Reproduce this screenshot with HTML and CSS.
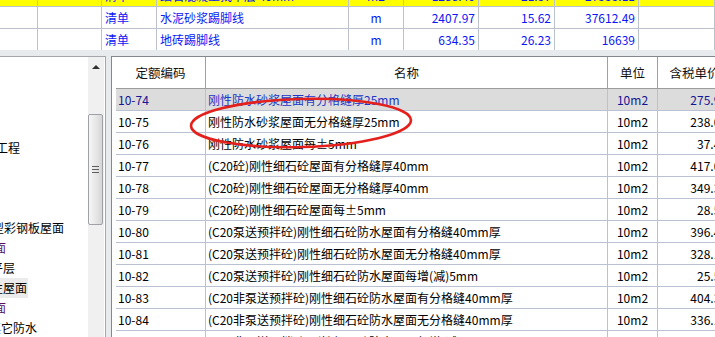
FILE: index.html
```html
<!DOCTYPE html>
<html lang="zh-CN">
<head>
  <meta charset="UTF-8" />
  <title>定额查询</title>
  <link rel="stylesheet" href="styles.css">
</head>
<body>

  <div class="bill-grid">
    <div class="bill-rows">
      <div class="bill-row current">
        <div></div><div></div><div>清单</div><div>细石混凝土找平层 40mm</div>
        <div class="ctr">m2</div><div class="num">1288.40</div><div class="num">21.37</div><div class="num">27533.11</div><div></div>
      </div>
      <div class="bill-row">
        <div></div><div></div><div>清单</div><div>水泥砂浆踢脚线</div>
        <div class="ctr">m</div><div class="num">2407.97</div><div class="num">15.62</div><div class="num">37612.49</div><div></div>
      </div>
      <div class="bill-row">
        <div></div><div></div><div>清单</div><div>地砖踢脚线</div>
        <div class="ctr">m</div><div class="num">634.35</div><div class="num">26.23</div><div class="num">16639</div><div></div>
      </div>
    </div>
  </div>

  <div class="work">
    <div class="tree-panel">
      <div class="tree">
        <div class="node"></div>
        <div class="node"></div>
        <div class="node"></div>
        <div class="node"></div>
        <div class="node"><span class="shift-28">屋面工程</span></div>
        <div class="node"></div>
        <div class="node"></div>
        <div class="node"></div>
        <div class="node"><span class="shift-20">压型彩钢板屋面</span></div>
        <div class="node group"><span class="shift-30">瓦屋面</span></div>
        <div class="node"><span class="shift-21">找平层</span></div>
        <div class="node"><span class="shift-21 selected">刚性屋面</span></div>
        <div class="node group"><span class="shift-30">平屋面</span></div>
        <div class="node"><span class="shift-11">其它防水</span></div>
      </div>
      <div class="vscroll">
        <div class="up"><span class="arrow"></span></div>
        <div class="thumb"><span class="grip"></span></div>
      </div>
    </div>

    <div class="quota-panel">
      <div class="quota-table">
        <div class="q-head">
          <div>定额编码</div><div>名称</div><div>单位</div><div>含税单价</div>
        </div>
        <div class="q-row active">
          <div>10-74</div><div class="name">刚性防水砂浆屋面有分格缝厚25mm</div><div class="ctr">10m2</div><div class="num">275.93</div>
        </div>
        <div class="q-row">
          <div>10-75</div><div class="name">刚性防水砂浆屋面无分格缝厚25mm</div><div class="ctr">10m2</div><div class="num">238.05</div>
        </div>
        <div class="q-row">
          <div>10-76</div><div class="name">刚性防水砂浆屋面每±5mm</div><div class="ctr">10m2</div><div class="num">37.44</div>
        </div>
        <div class="q-row">
          <div>10-77</div><div class="name">(C20砼)刚性细石砼屋面有分格缝厚40mm</div><div class="ctr">10m2</div><div class="num">417.06</div>
        </div>
        <div class="q-row">
          <div>10-78</div><div class="name">(C20砼)刚性细石砼屋面无分格缝厚40mm</div><div class="ctr">10m2</div><div class="num">349.33</div>
        </div>
        <div class="q-row">
          <div>10-79</div><div class="name">(C20砼)刚性细石砼屋面每±5mm</div><div class="ctr">10m2</div><div class="num">28.54</div>
        </div>
        <div class="q-row">
          <div>10-80</div><div class="name">(C20泵送预拌砼)刚性细石砼防水屋面有分格缝40mm厚</div><div class="ctr">10m2</div><div class="num">396.41</div>
        </div>
        <div class="q-row">
          <div>10-81</div><div class="name">(C20泵送预拌砼)刚性细石砼防水屋面无分格缝40mm厚</div><div class="ctr">10m2</div><div class="num">328.17</div>
        </div>
        <div class="q-row">
          <div>10-82</div><div class="name">(C20泵送预拌砼)刚性细石砼防水屋面每增(减)5mm</div><div class="ctr">10m2</div><div class="num">25.55</div>
        </div>
        <div class="q-row">
          <div>10-83</div><div class="name">(C20非泵送预拌砼)刚性细石砼防水屋面有分格缝40mm厚</div><div class="ctr">10m2</div><div class="num">404.33</div>
        </div>
        <div class="q-row">
          <div>10-84</div><div class="name">(C20非泵送预拌砼)刚性细石砼防水屋面无分格缝40mm厚</div><div class="ctr">10m2</div><div class="num">336.11</div>
        </div>
        <div class="q-row">
          <div>10-85</div><div class="name">(C20非泵送预拌砼)刚性细石砼防水屋面每增(减)5mm</div><div class="ctr">10m2</div><div class="num">26.02</div>
        </div>
      </div>
    </div>
  </div>

  <!-- red hand-drawn mark over row 10-75 -->
  <svg class="mark" width="715" height="337" viewBox="0 0 715 337">
    <ellipse cx="301" cy="123" rx="110" ry="24" transform="rotate(-1.5 301 123)" fill="none" stroke="#e3201b" stroke-width="2.6"/>
  </svg>

</body>
</html>
```

FILE: styles.css
```css
* {
  box-sizing: border-box;
}

body {
  margin: 0;
  width: 715px;
  height: 337px;
  overflow: hidden;
  position: relative;
  background: #e8ebed;
  font-family: "Noto Sans CJK SC", "DejaVu Sans", sans-serif;
  font-size: 12px;
  color: #000;
}

/* bill list on top */
.bill-grid {
  height: 50px;
  overflow: hidden;
  background: #fff;
}

.bill-rows {
  margin-top: -15px;
}

.bill-row {
  display: grid;
  grid-template-columns: 38px 64px 55px 192px 55px 75px 76px 84px 76px;
  height: 22px;
}

.bill-row > div {
  border-right: 1px solid #bcc2cc;
  border-bottom: 1px solid #bcc2cc;
  color: #0d17f5;
  padding: 0 3px;
  line-height: 21px;
  white-space: nowrap;
  overflow: hidden;
}

.bill-row.current > div {
  background: #ffff00;
}

.num {
  text-align: right;
}

.ctr {
  text-align: center;
}

/* lower work area */
.work {
  display: flex;
  padding-top: 6px;
  height: 287px;
}

.tree-panel {
  width: 106px;
  flex: none;
  display: flex;
  background: #fff;
  border-top: 1px solid #a3a7ab;
  border-right: 1px solid #a3a7ab;
  padding-right: 1px;
}

.tree {
  width: 88px;
  overflow: hidden;
  padding-top: 1px;
}

.node {
  height: 20px;
  line-height: 20px;
  white-space: nowrap;
}

.node.group {
  color: #5a1060;
}

.shift-11 { margin-left: -11px; }
.shift-20 { margin-left: -20px; }
.shift-21 { margin-left: -21px; }
.shift-28 { margin-left: -28px; }
.shift-30 { margin-left: -30px; }

.node span {
  display: inline-block;
}

.selected {
  background: #ebebeb;
  padding-right: 1px;
}

.vscroll {
  width: 16px;
  background: #f0f0f0;
  display: flex;
  flex-direction: column;
}

.vscroll .up {
  height: 17px;
  display: flex;
  align-items: center;
  justify-content: center;
  padding-top: 3px;
}

.arrow {
  width: 0;
  height: 0;
  border-left: 4px solid transparent;
  border-right: 4px solid transparent;
  border-bottom: 4px solid #303030;
}

.thumb {
  margin-top: 40px;
  width: 15px;
  height: 111px;
  border: 1px solid #9ea2a6;
  border-radius: 2px;
  background: linear-gradient(to right, #f6f6f6, #e6e6e6 55%, #d6d6d6);
  display: flex;
  align-items: center;
  justify-content: center;
}

.grip {
  width: 7px;
  height: 7px;
  background: repeating-linear-gradient(#5e5e5e 0 1px, transparent 1px 3px);
}

/* quota table */
.quota-panel {
  flex: 1;
  margin-left: 5px;
  background: #fff;
  border-left: 1px solid #83878f;
  border-top: 1px solid #83878f;
  padding-left: 4px;
  overflow: hidden;
}

.quota-table {
  width: 616px;
}

.q-head,
.q-row {
  display: grid;
  grid-template-columns: 90px 402px 50px 74px;
}

.q-head {
  height: 32px;
  border-bottom: 1px solid #9c9c9c;
}

.q-head > div {
  border-right: 1px solid #a0a0a0;
  display: flex;
  align-items: center;
  justify-content: center;
  font-size: 12.5px;
  color: #111;
  white-space: nowrap;
  overflow: hidden;
}

.q-row {
  height: 22px;
}

.q-row > div {
  border-right: 1px solid #b9c1d3;
  border-bottom: 1px solid #b9c1d3;
  line-height: 21px;
  padding: 0 2px;
  white-space: nowrap;
  overflow: hidden;
}

.q-row > .num {
  padding-right: 4px;
}

.q-row.active > div {
  background: #dcdcdc;
  color: #141496;
}

.q-row.active > .name {
  color: #2236c8;
}

.mark {
  position: absolute;
  left: 0;
  top: 0;
  pointer-events: none;
}
```
